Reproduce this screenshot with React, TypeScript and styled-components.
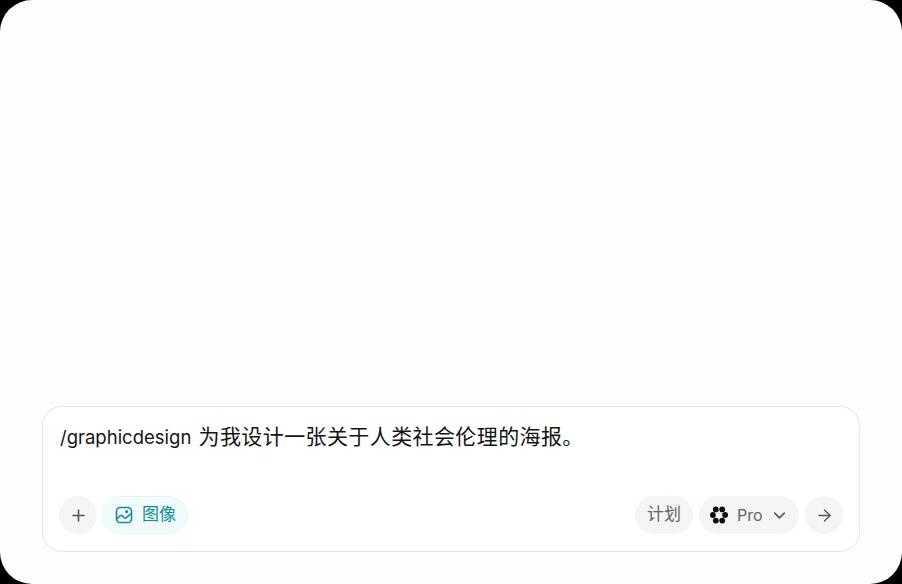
import React from 'react';
import styled, { createGlobalStyle } from 'styled-components';
import { ArrowRight, ChevronDown, Plus } from 'lucide-react';

const GlobalStyle = createGlobalStyle`
    html, body {
        margin: 0;
        padding: 0;
        background: #000;
    }
    * {
        box-sizing: border-box;
    }
`

const Screen = styled.div`
    width: 902px;
    height: 584px;
    background: #fdfdfd;
    border-radius: 32px;
    overflow: hidden;
    display: flex;
    flex-direction: column;
    justify-content: flex-end;
    padding: 0 42px 32px 42px;
    font-family: Inter, "Noto Sans CJK SC", sans-serif;
`

const Composer = styled.div`
    height: 146px;
    background: #ffffff;
    border: 1px solid #e4e4e4;
    border-radius: 20px;
    padding: 15px 16px 17px 16px;
    display: flex;
    flex-direction: column;
    justify-content: space-between;
`

const Prompt = styled.div`
    font-size: 18.5px;
    line-height: 30px;
    color: #141414;
    white-space: nowrap;
    padding-left: 1px;
`

const PromptCjk = styled.span`
    font-size: 21px;
    letter-spacing: 0.4px;
    margin-left: 2px;
`

const Toolbar = styled.div`
    display: flex;
    align-items: center;
    justify-content: space-between;
`

const Group = styled.div<{ $gap: number }>`
    display: flex;
    align-items: center;
    gap: ${(props) => props.$gap}px;
`

const RoundButton = styled.button`
    width: 38px;
    height: 38px;
    padding: 0;
    border: none;
    border-radius: 50%;
    background: #f5f5f5;
    color: #555555;
    display: flex;
    align-items: center;
    justify-content: center;
`

const Pill = styled.button<{ $active?: boolean }>`
    height: 38px;
    display: flex;
    align-items: center;
    border-radius: 19px;
    font-family: inherit;
    font-size: 17px;
    border: 1px solid ${(props) => props.$active ? '#e3f6f7' : 'transparent'};
    background: ${(props) => props.$active ? '#f1fbfb' : '#f5f5f5'};
    color: ${(props) => props.$active ? '#108ea0' : '#666666'};
`

const PillLabel = styled.span`
    line-height: 20px;
    margin-top: -2px;
`

const ImagePill = styled(Pill)`
    padding: 0 11px 0 12px;
    gap: 9px;
`

const PlanPill = styled(Pill)`
    width: 58px;
    padding: 0;
    justify-content: center;
`

const ModelPill = styled(Pill)`
    width: 100px;
    padding: 0 8px 0 10px;
    gap: 9px;
    font-size: 16px;
`

const ChevronSlot = styled.span`
    display: flex;
    margin-left: -2px;
    color: #555555;
`

const ImageIcon = () => (
    <svg width="18" height="18" viewBox="0 0 18 18" fill="none" stroke="currentColor" strokeWidth="1.6" strokeLinecap="round" strokeLinejoin="round">
        <rect x="1.5" y="1.5" width="15" height="15" rx="3.6" />
        <path d="M2 12.8 5.2 9.7a1.5 1.5 0 0 1 2 0l2 1.9a1.5 1.5 0 0 0 2 0l4.6-3.8" />
        <circle cx="11.6" cy="5.6" r="0.8" fill="currentColor" />
    </svg>
)

const FlowerIcon = () => (
    <svg width="18" height="18" viewBox="0 0 18 18" fill="#0c0c0c">
        <circle cx="5.8" cy="3.4" r="2.9" />
        <circle cx="12.2" cy="3.4" r="2.9" />
        <circle cx="2.9" cy="9" r="2.9" />
        <circle cx="15.1" cy="9" r="2.9" />
        <circle cx="5.8" cy="14.6" r="2.9" />
        <circle cx="12.2" cy="14.6" r="2.9" />
    </svg>
)

const App = () => <Screen>
    <GlobalStyle />
    <Composer>
        <Prompt>/graphicdesign <PromptCjk>为我设计一张关于人类社会伦理的海报。</PromptCjk></Prompt>
        <Toolbar>
            <Group $gap={5}>
                <RoundButton><Plus size={19} strokeWidth={2} /></RoundButton>
                <ImagePill $active><ImageIcon /> <PillLabel>图像</PillLabel></ImagePill>
            </Group>
            <Group $gap={6}>
                <PlanPill><PillLabel>计划</PillLabel></PlanPill>
                <ModelPill>
                    <FlowerIcon />
                    Pro
                    <ChevronSlot><ChevronDown size={19} strokeWidth={1.9} /></ChevronSlot>
                </ModelPill>
                <RoundButton><ArrowRight size={19} strokeWidth={1.7} /></RoundButton>
            </Group>
        </Toolbar>
    </Composer>
</Screen>

export default App;
